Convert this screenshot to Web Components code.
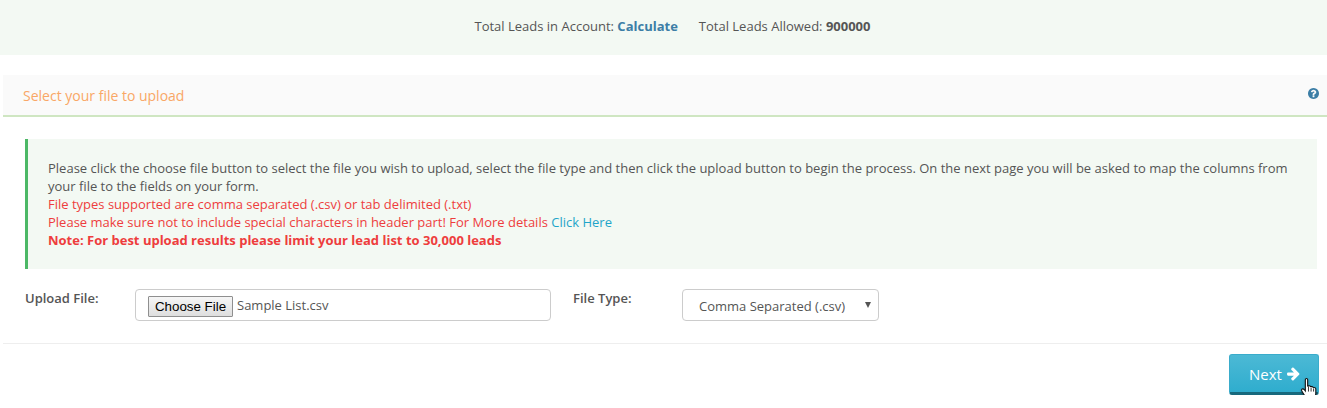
<!DOCTYPE html>
<html>
<head>
<meta charset="utf-8">
<title>Upload</title>
<style>
  html, body { margin: 0; background: #fff; }
  body { font-family: "Open Sans", sans-serif; font-size: 13px; color: #555; }
</style>
</head>
<body>
<lead-stats allowed="900000"></lead-stats>
<upload-panel heading="Select your file to upload">
  <upload-note>
    Please click the choose file button to select the file you wish to upload, select the file type and then click the upload button to begin the process. On the next page you will be asked to map the columns from your file to the fields on your form.
    <span slot="types">File types supported are comma separated (.csv) or tab delimited (.txt)</span>
    <span slot="special">Please make sure not to include special characters in header part! For More details <a href="#">Click Here</a></span>
    <span slot="limit">Note: For best upload results please limit your lead list to 30,000 leads</span>
  </upload-note>
  <upload-form></upload-form>
  <next-button>Next</next-button>
</upload-panel>

<script>
class LeadStats extends HTMLElement {
  constructor() {
    super();
    this.attachShadow({ mode: 'open' });
  }
  connectedCallback() {
    this.shadowRoot.innerHTML = `<style>
      :host { display: flex; justify-content: center; align-items: center; gap: 21px; box-sizing: border-box; height: 55px; background: #f3f9f3; padding: 0 0 3px 18px; line-height: 18px; color: #555; }
      a { color: #3c7ea6; font-weight: 700; text-decoration: none; }
      b { font-weight: 700; }
    </style>
    <span>Total Leads in Account: <a href="#">Calculate</a></span>
    <span>Total Leads Allowed: <b>${this.getAttribute('allowed')}</b></span>`;
  }
}

class UploadPanel extends HTMLElement {
  constructor() {
    super();
    this.attachShadow({ mode: 'open' });
  }
  connectedCallback() {
    this.shadowRoot.innerHTML = `<style>
      :host { display: block; margin: 20px 0 0 3px; }
      header { display: flex; justify-content: space-between; height: 40px; padding: 0 8px 0 20px; background: #fafafa; border-bottom: 2px solid #cfe6c2; font-size: 14px; line-height: 42px; color: #f9a766; }
      header svg { width: 11px; height: 11px; margin-top: 13px; fill: #3c7ea6; }
      .body { padding: 22px 10px 0 22px; }
      footer { display: flex; justify-content: flex-end; margin-top: 22px; padding: 10px 8px 0 0; border-top: 1px solid #eee; }
    </style>
    <header>
      <span>${this.getAttribute('heading')}</span>
      <svg viewBox="0 128 1536 1536"><path d="M896 1376v-192q0-14-9-23t-23-9h-192q-14 0-23 9t-9 23v192q0 14 9 23t23 9h192q14 0 23-9t9-23zm256-672q0-88-55.5-163t-138.5-116-170-41q-243 0-371 213-15 24 8 42l132 100q7 6 19 6 16 0 25-12 53-68 86-92 34-24 86-24 48 0 85.5 26t37.5 59q0 38-20 61t-68 45q-63 28-115.5 86.5t-52.5 125.5v36q0 14 9 23t23 9h192q14 0 23-9t9-23q0-19 21.5-49.5t54.5-49.5q32-18 49-28.5t46-35 44.5-48 28-60.5 12.5-81zm384 192q0 209-103 385.5t-279.5 279.5-385.5 103-385.5-103-279.5-279.5-103-385.5 103-385.5 279.5-279.5 385.5-103 385.5 103 279.5 279.5 103 385.5z"/></svg>
    </header>
    <div class="body"><slot></slot></div>
    <footer><slot name="footer"></slot></footer>`;
    this.querySelector('next-button').slot = 'footer';
  }
}

class UploadNote extends HTMLElement {
  constructor() {
    super();
    this.attachShadow({ mode: 'open' });
  }
  connectedCallback() {
    this.shadowRoot.innerHTML = `<style>
      :host { display: block; box-sizing: border-box; height: 130px; padding: 20px 20px 0 20px; background: #f3f9f3; border-left: 3px solid #4cb866; line-height: 18px; color: #555; }
      div { color: #ee3d3d; }
      .limit { font-weight: 700; }
    </style>
    <slot></slot>
    <div><slot name="types"></slot></div>
    <div><slot name="special"></slot></div>
    <div class="limit"><slot name="limit"></slot></div>`;
    const link = this.querySelector('a');
    link.style.color = '#1fa5c9';
    link.style.textDecoration = 'none';
  }
}

class UploadForm extends HTMLElement {
  constructor() {
    super();
    this.attachShadow({ mode: 'open' });
  }
  connectedCallback() {
    this.shadowRoot.innerHTML = `<style>
      :host { display: flex; align-items: flex-start; margin-top: 20px; line-height: 18px; color: #555; }
      label { font-weight: 600; }
      .up { width: 110px; }
      .type { width: 109px; margin-left: 22px; }
      .file { box-sizing: border-box; display: flex; align-items: center; gap: 4px; width: 416px; height: 32px; padding: 2px 12px 0; border: 1px solid #ccc; border-radius: 4px; background: #fff; }
      button { box-sizing: border-box; width: 85px; height: 21px; padding: 0; border: 1px solid #8f8f8f; border-radius: 1px; background: linear-gradient(#f6f6f6, #dedede); font: 13.333px "Liberation Sans", sans-serif; color: #000; outline: none; }
      .file span { position: relative; top: -1px; }
      .select { position: relative; box-sizing: border-box; width: 197px; height: 32px; padding: 7px 0 0 16px; border: 1px solid #ccc; border-radius: 4px; background: #fff; }
      .select i { position: absolute; right: 7px; top: 12px; width: 0; height: 0; border: 3.5px solid transparent; border-top: 6px solid #555; border-bottom: 0; }
    </style>
    <label class="up">Upload File:</label>
    <div class="file"><button type="button">Choose File</button><span>Sample List.csv</span></div>
    <label class="type">File Type:</label>
    <div class="select"><span>Comma Separated (.csv)</span><i></i></div>`;
  }
}

class NextButton extends HTMLElement {
  constructor() {
    super();
    this.attachShadow({ mode: 'open' });
  }
  connectedCallback() {
    this.shadowRoot.innerHTML = `<style>
      :host { display: block; position: relative; width: 90px; height: 41px; }
      button { display: flex; align-items: center; justify-content: center; gap: 4px; box-sizing: border-box; width: 100%; height: 100%; padding: 0 0 0 2px; border: 1px solid #3aaccb; border-bottom: 3px solid #17697d; border-radius: 3px; background: linear-gradient(#4cb9d5, #2fadce); font: 15px "Open Sans", sans-serif; color: #fff; }
      button svg { width: 15px; height: 15px; fill: #fff; }
      .hand { position: absolute; left: 71px; top: 24px; width: 18px; height: 24px; filter: drop-shadow(0 1px 1px rgba(0,0,0,.3)); }
    </style>
    <button type="button"><slot></slot><svg viewBox="0 0 1792 1792"><path d="M1600 960q0 54-37 91l-651 651q-39 37-91 37-51 0-90-37l-75-75q-38-38-38-91t38-91l293-293h-704q-52 0-84.5-37.5t-32.5-90.5v-128q0-53 32.5-90.5t84.5-37.5h704l-293-294q-38-36-38-90t38-90l75-75q38-38 90-38 53 0 91 38l651 651q37 35 37 90z"/></svg></button>
    <svg class="hand" viewBox="0 0 16 23"><path d="M4.500 1.500c0-1.300 2.200-1.300 2.200 0v6.200l1-.2c.9-.2 1.500.1 1.700.6l1 .1c.8-.1 1.300.2 1.500.8l.9.1c1-.1 1.700.5 1.700 1.500v4.400c0 1.800-.6 2.900-1.300 3.800v2.800H5.300v-2.300L1.400 13c-.7-1-.7-2 .1-2.400.8-.4 1.500 0 2 .6l1 1.200z" fill="#fff" stroke="#111" stroke-width="1"/><path d="M7.500 8v5M10 9v4M12.400 10v3" fill="none" stroke="#111" stroke-width=".8"/></svg>`;
  }
}

customElements.define('lead-stats', LeadStats);
customElements.define('upload-panel', UploadPanel);
customElements.define('upload-note', UploadNote);
customElements.define('upload-form', UploadForm);
customElements.define('next-button', NextButton);
</script>
</body>
</html>
